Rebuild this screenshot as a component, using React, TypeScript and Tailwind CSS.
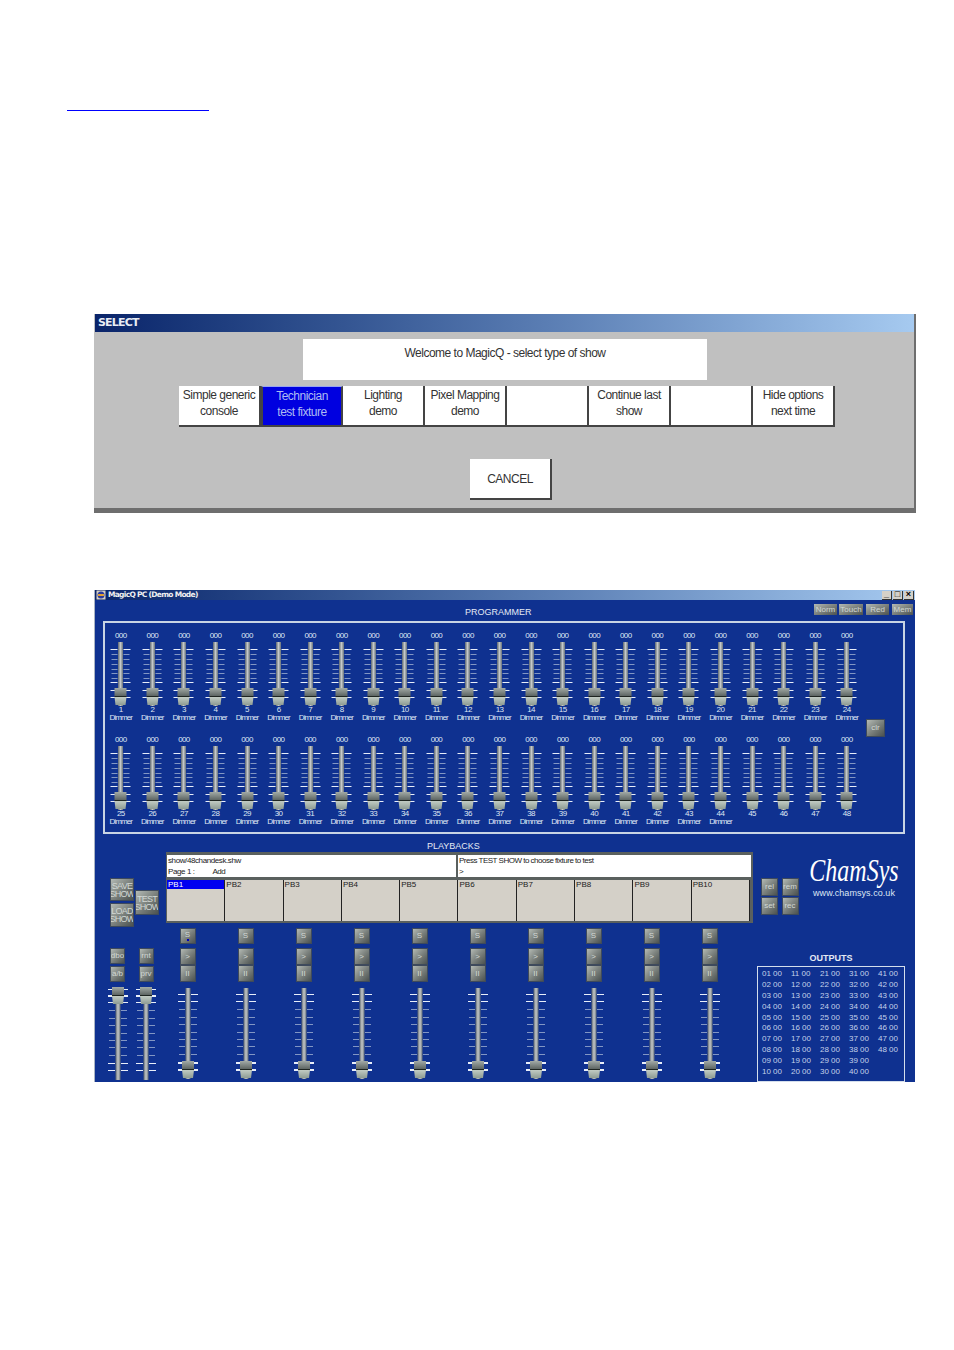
import React from "react";

const selectOptions = [
  ["Simple generic", "console"],
  ["Technician", "test fixture"],
  ["Lighting", "demo"],
  ["Pixel Mapping", "demo"],
  ["", ""],
  ["Continue last", "show"],
  ["", ""],
  ["Hide options", "next time"],
];

const channelTicks = [8, 13, 18, 23, 28, 32, 37, 41, 49, 56];
const playbackTicks = [7, 14, 22, 30, 37, 45, 52, 59, 67, 75, 82];
const masterTicks = [8, 15, 23, 31, 38, 46, 53, 60, 68, 76, 83];

function Fader({
  width,
  height,
  knobTop,
  ticks,
  bright,
}: {
  width: number;
  height: number;
  knobTop: number;
  ticks: number[];
  bright: number[];
}) {
  const c = width / 2;
  return (
    <svg width={width} height={height} className="block shrink-0">
      <rect x={c - 2.5} y={1} width={5} height={height - 1} fill="url(#faderTrack)" />
      {ticks.map((t) => {
        const on = bright.includes(t);
        return (
          <g key={t} stroke={on ? "#e8eefa" : "#8296c4"} strokeWidth={1}>
            <line x1={c - (on ? 10 : 9)} x2={c - 3} y1={t + 0.5} y2={t + 0.5} />
            <line x1={c + 3} x2={c + (on ? 10 : 9)} y1={t + 0.5} y2={t + 0.5} />
          </g>
        );
      })}
      <rect x={c - 6} y={knobTop} width={12} height={9} fill="url(#faderKnobTop)" />
      <path
        d={`M${c - 6} ${knobTop + 9}H${c + 6}L${c + 5} ${knobTop + 17}H${c - 5}Z`}
        fill="url(#faderKnobLow)"
      />
      <line x1={c - 6} x2={c + 6} y1={knobTop + 8.5} y2={knobTop + 8.5} stroke="#1d2420" />
      <line x1={c - 10} x2={c - 6} y1={knobTop + 2.5} y2={knobTop + 2.5} stroke="#e8eefa" />
      <line x1={c + 6} x2={c + 10} y1={knobTop + 2.5} y2={knobTop + 2.5} stroke="#e8eefa" />
      <line x1={c - 10} x2={c - 6} y1={knobTop + 9.5} y2={knobTop + 9.5} stroke="#e8eefa" />
      <line x1={c + 6} x2={c + 10} y1={knobTop + 9.5} y2={knobTop + 9.5} stroke="#e8eefa" />
    </svg>
  );
}

function SteelButton({
  className,
  children,
}: {
  className: string;
  children?: React.ReactNode;
}) {
  return (
    <div
      className={`flex shrink-0 items-center justify-center overflow-hidden border border-[#3e4a5c] bg-gradient-to-br from-[#b4bab4] via-[#7c827e] to-[#4c5250] text-center text-[#d2d8d4] ${className}`}
    >
      {children}
    </div>
  );
}

function ChannelFader({ n, named }: { n: number; named: boolean }) {
  return (
    <div className="flex w-[31.57px] shrink-0 flex-col items-center text-[8px] leading-[8px] tracking-[-0.6px] text-[#dfe7f4]">
      <div className="h-[11px] leading-[11px]">000</div>
      <Fader width={31} height={65} knobTop={47} ticks={channelTicks} bright={[8, 41]} />
      <div className="h-[8px]">{n}</div>
      <div className="h-[8px] whitespace-nowrap tracking-[-0.9px]">{named ? "Dimmer" : ""}</div>
    </div>
  );
}

function PlaybackStrip({ index }: { index: number }) {
  return (
    <div className="flex w-[58px] shrink-0 flex-col items-center text-[8px]">
      <SteelButton className="h-[16px] w-[16px]">
        <span className="flex flex-col items-center leading-[8px]">
          S
          {index === 0 && <span className="h-[2px] w-[2px] bg-[#0000c0]" />}
        </span>
      </SteelButton>
      <SteelButton className="mt-[4px] h-[17px] w-[16px]">&gt;</SteelButton>
      <SteelButton className="h-[17px] w-[16px]">II</SteelButton>
      <div className="mt-[5px]">
        <Fader width={28} height={92} knobTop={74} ticks={playbackTicks} bright={[7, 14, 75, 82]} />
      </div>
    </div>
  );
}

function MasterStrip({ top, bottom }: { top: string; bottom: string }) {
  return (
    <div className="flex w-[28px] shrink-0 flex-col items-center text-[8px]">
      <SteelButton className="h-[16px] w-[15px]">{top}</SteelButton>
      <SteelButton className="mt-[2px] h-[16px] w-[15px]">{bottom}</SteelButton>
      <div className="mt-[5px]">
        <Fader width={28} height={93} knobTop={0} ticks={masterTicks} bright={[8, 15, 76, 83]} />
      </div>
    </div>
  );
}

function OutputsGrid() {
  const cells: string[] = [];
  for (let i = 1; i <= 48; i++) cells.push(`${String(i).padStart(2, "0")} 00`);
  return (
    <div className="grid h-[110px] w-[149px] grid-flow-col grid-cols-5 grid-rows-10 pl-[4px] pt-px text-[8px] leading-[11px] text-[#c4d2ea]">
      {cells.map((c) => (
        <div key={c} className="whitespace-pre">
          {c}
        </div>
      ))}
    </div>
  );
}

export default function App() {
  const row1 = Array.from({ length: 24 }, (_, i) => i + 1);
  const row2 = Array.from({ length: 24 }, (_, i) => i + 25);
  const pbs = Array.from({ length: 10 }, (_, i) => i);

  return (
    <div className="h-[1350px] w-[954px] overflow-hidden bg-white font-['Liberation_Sans',sans-serif]">
      <svg width="0" height="0" className="block">
        <defs>
          <linearGradient id="faderTrack" x1="0" x2="1" y1="0" y2="0">
            <stop offset="0" stopColor="#5c6670" />
            <stop offset="0.5" stopColor="#c4c8c8" />
            <stop offset="1" stopColor="#66707a" />
          </linearGradient>
          <linearGradient id="faderKnobTop" x1="0" x2="0" y1="0" y2="1">
            <stop offset="0" stopColor="#a2aaa6" />
            <stop offset="1" stopColor="#545c5a" />
          </linearGradient>
          <linearGradient id="faderKnobLow" x1="0" x2="0" y1="0" y2="1">
            <stop offset="0" stopColor="#c2ccc4" />
            <stop offset="1" stopColor="#8e9c94" />
          </linearGradient>
        </defs>
      </svg>

      <div className="ml-[67px] mt-[110px] h-px w-[142px] bg-[#0000ff]" />

      {/* select dialog */}
      <div className="ml-[94px] mt-[203px] h-[199px] w-[822px] border-b-[5px] border-r-2 border-[#6e6e6e] bg-[#c0c0c0] text-[12px] tracking-[-0.5px] text-[#333]">
        <div className="ml-px flex h-[18px] items-center bg-gradient-to-r from-[#0a246a] to-[#a6caf0] pl-[3px] pt-px font-['DejaVu_Sans',sans-serif] text-[11px] font-bold tracking-[-0.8px] text-[#e8ecf4]">
          SELECT
        </div>
        <div className="ml-[209px] mt-[7px] h-[41px] w-[404px] bg-white pt-[5px] text-center">
          Welcome to MagicQ - select type of show
        </div>
        <div className="ml-[85px] mt-[6px] flex">
          {selectOptions.map(([a, b], i) => (
            <div
              key={i}
              className={`flex h-[41px] w-[82px] flex-col items-center border-b-2 border-r-2 border-[#444] pt-px leading-[16px] ${
                i === 1 ? "border-l-2 border-t border-t-[#9aa6f0] bg-[#0000e0] text-[#aebcf2]" : "bg-white"
              }`}
            >
              <span>{a}</span>
              <span>{b}</span>
            </div>
          ))}
        </div>
        <div className="ml-[376px] mt-[32px] flex h-[41px] w-[82px] items-center justify-center border-b-2 border-r-2 border-[#444] bg-white">
          CANCEL
        </div>
      </div>

      {/* MagicQ window */}
      <div className="ml-[94px] mt-[77px] h-[492px] w-[821px] overflow-hidden border-l border-[#aab4c4] bg-[#0f3190]">
        <div className="flex h-[10px] items-center bg-gradient-to-r from-[#0a246a] to-[#a6caf0]">
          <svg width="10" height="10" viewBox="0 0 10 10" className="ml-[1px] shrink-0">
            <rect x="0.5" y="0.5" width="9" height="9" fill="#d8d0c0" />
            <circle cx="5" cy="5" r="3.5" fill="#2a3aa0" />
            <rect x="2" y="4" width="6" height="2" fill="#e0a030" />
          </svg>
          <span className="ml-[2px] font-['DejaVu_Sans',sans-serif] text-[7.5px] font-bold tracking-[-0.7px] text-[#f0f0f0]">
            MagicQ PC (Demo Mode)
          </span>
          <div className="ml-auto mr-px flex gap-px">
            {["_", "□", "×"].map((g) => (
              <div
                key={g}
                className="flex h-[9px] w-[10px] items-center justify-center border-b border-r border-[#333] bg-[#d4d0c8] text-[9px] font-bold leading-[9px] text-black"
              >
                {g}
              </div>
            ))}
          </div>
        </div>

        <div className="flex h-[21px] items-start pl-[370px]">
          <div className="mt-[7px] w-[65px] text-center text-[9px] leading-[10px] text-[#e4eaf4]">
            PROGRAMMER
          </div>
          <div className="ml-[284px] mt-[4px] flex text-[8px] leading-[8px]">
            <SteelButton className="h-[11px] w-[23px] border-0">Norm</SteelButton>
            <SteelButton className="ml-[2px] h-[11px] w-[24px] border-0">Touch</SteelButton>
            <SteelButton className="ml-[3px] h-[11px] w-[23px] border-0">Red</SteelButton>
            <SteelButton className="ml-[3px] h-[11px] w-[21px] border-0">Mem</SteelButton>
          </div>
        </div>

        <div className="ml-[8px] flex h-[213px] w-[802px] border-2 border-[#c8d4e4] pt-[7px]">
          <div className="w-[758px] shrink-0">
            <div className="flex">
              {row1.map((n) => (
                <ChannelFader key={n} n={n} named />
              ))}
            </div>
            <div className="mt-[12px] flex">
              {row2.map((n) => (
                <ChannelFader key={n} n={n} named={n <= 44} />
              ))}
            </div>
          </div>
          <div className="pl-[3px] pt-[89px]">
            <SteelButton className="h-[18px] w-[19px] text-[8px]">clr</SteelButton>
          </div>
        </div>

        <div className="flex">
          {/* left controls */}
          <div className="w-[63.5px] shrink-0 pl-[8.5px] pt-[44px]">
            <div className="ml-[6.5px] flex text-[9px] leading-[8px] tracking-[-0.7px]">
              <div className="flex flex-col gap-[2px]">
                <SteelButton className="h-[23px] w-[24px]">SAVE SHOW</SteelButton>
                <SteelButton className="h-[24px] w-[24px]">LOAD SHOW</SteelButton>
              </div>
              <SteelButton className="ml-px mt-[12px] h-[25px] w-[24px]">TEST SHOW</SteelButton>
            </div>
            <div className="mt-[21px] flex gap-[0.5px]">
              <MasterStrip top="dbo" bottom="a/b" />
              <MasterStrip top="rnt" bottom="prv" />
            </div>
          </div>

          {/* playbacks */}
          <div className="w-[593.5px] shrink-0">
            <div className="h-[18px] pl-[268.5px] pt-[7px] text-[9px] leading-[10px] text-[#e4eaf4]">
              PLAYBACKS
            </div>
            <div className="ml-[7px] h-[71px] w-[587px] bg-[#5a605e] px-[1.5px] pb-[2px] pt-[3px] text-[8px] leading-[11px] text-[#222]">
              <div className="flex h-[22px] bg-white">
                <div className="w-[291px] whitespace-pre border-r-2 border-[#5a605e] pl-px tracking-[-0.4px]">
                  show/48chandesk.shw{"\n"}Page 1 :          Add
                </div>
                <div className="whitespace-pre pl-px tracking-[-0.5px]">
                  Press TEST SHOW to choose fixture to test{"\n"}&gt;
                </div>
              </div>
              <div className="mt-[3px] flex h-[41px] w-[583px] bg-[#d4d0c8]">
                {pbs.map((i) => (
                  <div key={i} className="h-full w-[58.3px] shrink-0 border-r border-[#222]">
                    <div className={`h-[9px] pl-px leading-[9px] ${i === 0 ? "bg-[#0000f0] text-white" : ""}`}>
                      PB{i + 1}
                    </div>
                  </div>
                ))}
              </div>
            </div>
            <div className="mt-[5px] flex">
              {pbs.map((i) => (
                <PlaybackStrip key={i} index={i} />
              ))}
            </div>
          </div>

          {/* logo and outputs */}
          <div className="shrink-0">
            <div className="flex h-[118px]">
              <div className="ml-[9px] mt-[44px] grid h-[37px] w-[38px] grid-cols-2 gap-x-[3px] gap-y-px text-[8px]">
                <SteelButton className="h-[18px] w-[17px]">rel</SteelButton>
                <SteelButton className="h-[18px] w-[17px]">rem</SteelButton>
                <SteelButton className="h-[18px] w-[17px]">set</SteelButton>
                <SteelButton className="h-[18px] w-[17px]">rec</SteelButton>
              </div>
              <div className="ml-[9px] mt-[20px] flex w-[92px] flex-col items-center text-white">
                <div className="scale-y-[1.3] font-['Liberation_Serif',serif] text-[24px] italic leading-[34px]">
                  ChamSys
                </div>
                <div className="mt-[-1px] text-[9px] leading-[12px] tracking-[0.05px] text-[#dde6f4]">www.chamsys.co.uk</div>
              </div>
            </div>
            <div className="ml-[5px] h-[14px] w-[148px] text-center text-[9px] font-bold leading-[12px] text-[#e4eaf4]">
              OUTPUTS
            </div>
            <div className="ml-[5px] h-[116px] w-[148px] border-[1.5px] border-[#d4deec]">
              <OutputsGrid />
            </div>
          </div>
        </div>
      </div>
    </div>
  );
}
